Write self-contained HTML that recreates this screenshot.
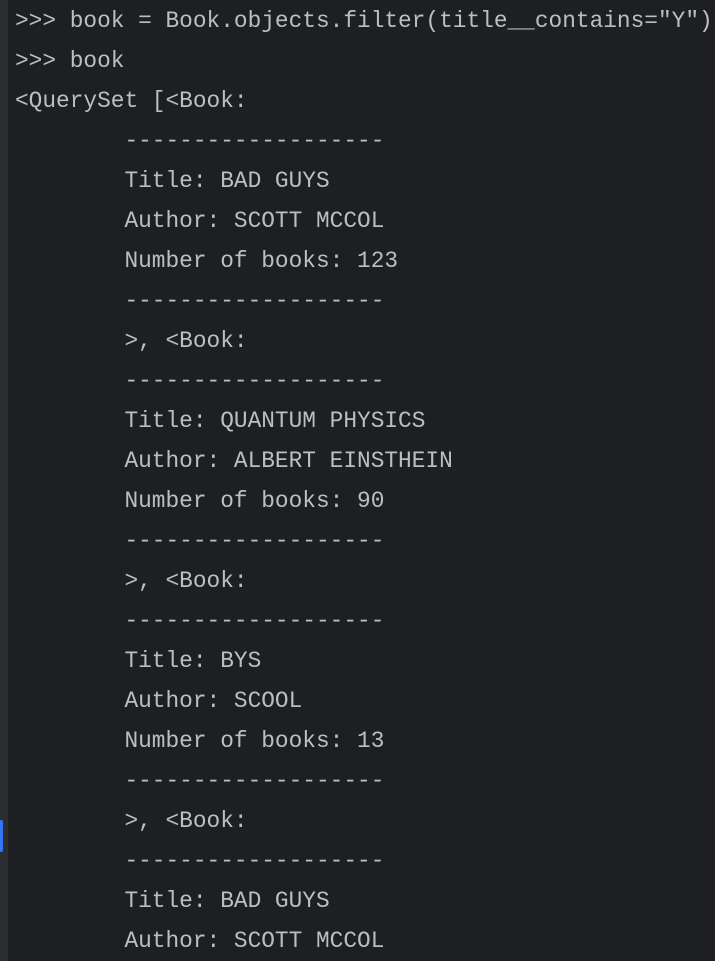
<!DOCTYPE html>
<html><head><style>
html,body{margin:0;padding:0;width:715px;height:961px;overflow:hidden;background:#1e1f22;}
.strip{position:absolute;left:0;top:0;width:8px;height:961px;background:#2b2d30;}
.mark{position:absolute;left:0;top:820px;width:3px;height:32px;background:#3574f0;border-radius:0 2px 2px 0;}
pre{position:absolute;left:15px;top:1px;margin:0;font-family:"Liberation Mono",monospace;font-size:22.8px;line-height:40px;color:#bcbec4;white-space:pre;}
</style></head><body>
<div class="strip"></div><div class="mark"></div>
<pre>&gt;&gt;&gt; book = Book.objects.filter(title__contains="Y")
&gt;&gt;&gt; book
&lt;QuerySet [&lt;Book:
        -------------------
        Title: BAD GUYS
        Author: SCOTT MCCOL
        Number of books: 123
        -------------------
        &gt;, &lt;Book:
        -------------------
        Title: QUANTUM PHYSICS
        Author: ALBERT EINSTHEIN
        Number of books: 90
        -------------------
        &gt;, &lt;Book:
        -------------------
        Title: BYS
        Author: SCOOL
        Number of books: 13
        -------------------
        &gt;, &lt;Book:
        -------------------
        Title: BAD GUYS
        Author: SCOTT MCCOL</pre>
</body></html>
